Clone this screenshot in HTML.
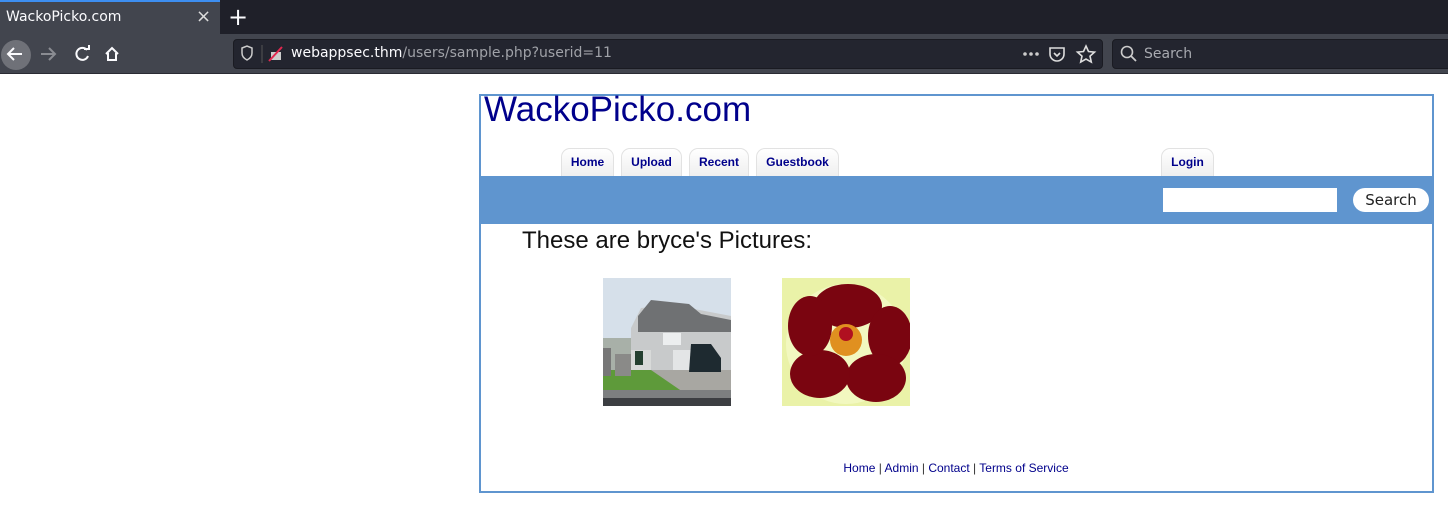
<!DOCTYPE html>
<html><head><meta charset="utf-8"><style>
*{margin:0;padding:0;box-sizing:border-box}
body{width:1448px;height:507px;background:#fff;position:relative;overflow:hidden;font-family:"Liberation Sans",sans-serif}
.a{position:absolute}
.tabbar{left:0;top:0;width:1448px;height:34px;background:#1f2029}
.tab{left:0;top:0;width:220px;height:34px;background:#42454e;border-top:2px solid #3d8ef0}
.toolbar{left:0;top:34px;width:1448px;height:40px;background:#42454e;border-bottom:1px solid #2a2b33}
.url{left:233px;top:39px;width:870px;height:30px;background:#23252f;border:1px solid #1a1b22;border-radius:4px}
.srch{left:1112px;top:39px;width:340px;height:30px;background:#23252f;border:1px solid #1a1b22;border-radius:4px}
.ui{font-family:"DejaVu Sans",sans-serif;color:#fbfbfe;font-size:14px}
.box{left:479px;top:94px;width:955px;height:399px;border:2px solid #5f95cf}
.navt{top:148px;height:28px;border:1px solid #e2e2e2;border-bottom:none;border-radius:9px 9px 0 0;background:linear-gradient(#fff,#efefef);font-size:12px;font-weight:bold;color:#00008b;text-align:center;line-height:27px}
</style></head><body>
<div class="a tabbar"></div>
<div class="a tab"></div>
<div class="a ui" style="left:6px;top:9px">WackoPicko.com</div>
<div class="a ui" style="left:196px;top:6px;font-size:18px;color:#ddd">×</div>
<div class="a ui" style="left:228px;top:3px;font-size:24px">+</div>
<div class="a toolbar"></div>
<div class="a" style="left:1px;top:40px;width:30px;height:30px;border-radius:50%;background:#6f7178"></div>
<svg class="a" style="left:0;top:34px" width="130" height="40"><g stroke="#fbfbfe" stroke-width="2" fill="none"><path d="M8 20h14M14 14l-6 6 6 6"/></g><g stroke="#8a8c92" stroke-width="2" fill="none"><path d="M41 20h14M49 14l6 6-6 6"/></g><g stroke="#fbfbfe" stroke-width="2" fill="none"><path d="M87 16a6 6 0 1 0 1 6"/><path d="M84 15h5v-4"/><path d="M106 20l6-6 6 6M108 19v7h8v-7"/></g></svg>
<div class="a url"></div>
<svg class="a" style="left:238px;top:44px" width="50" height="20"><path d="M4 4l5-2 5 2v5c0 4-3 6-5 7-2-1-5-3-5-7z" stroke="#ccc" stroke-width="1.5" fill="none"/><line x1="24" y1="1" x2="24" y2="19" stroke="#555"/><rect x="33" y="8" width="10" height="8" fill="#ccc"/><line x1="31" y1="17" x2="44" y2="3" stroke="#e22850" stroke-width="2"/></svg>
<div class="a ui" style="left:291px;top:45px">webappsec.thm<span style="color:#a0a2a8">/users/sample.php?userid=11</span></div>
<svg class="a" style="left:1020px;top:44px" width="80" height="20"><g fill="#ccc"><circle cx="5" cy="10" r="1.8"/><circle cx="11" cy="10" r="1.8"/><circle cx="17" cy="10" r="1.8"/></g><path d="M30 4h14v6a7 7 0 0 1-14 0z" stroke="#ddd" stroke-width="1.6" fill="none"/><path d="M34 9l3 3 3-3" stroke="#ddd" stroke-width="1.6" fill="none"/><path d="M66 2l2.5 5.5 6 .6-4.5 4 1.3 6-5.3-3-5.3 3 1.3-6-4.5-4 6-.6z" stroke="#ddd" stroke-width="1.6" fill="none"/></svg>
<div class="a srch"></div>
<svg class="a" style="left:1120px;top:45px" width="20" height="20"><circle cx="7" cy="7" r="5.5" stroke="#ccc" stroke-width="1.6" fill="none"/><line x1="11" y1="11" x2="16" y2="16" stroke="#ccc" stroke-width="1.8"/></svg>
<div class="a ui" style="left:1144px;top:46px;color:#a8aab0">Search</div>

<div class="a box"></div>
<div class="a" style="left:484px;top:90px;font-size:35px;color:#00008b">WackoPicko.com</div>
<div class="a navt" style="left:561px;width:53px">Home</div>
<div class="a navt" style="left:621px;width:61px">Upload</div>
<div class="a navt" style="left:689px;width:60px">Recent</div>
<div class="a navt" style="left:756px;width:83px">Guestbook</div>
<div class="a navt" style="left:1161px;width:53px">Login</div>
<div class="a" style="left:481px;top:176px;width:951px;height:48px;background:#5f95cf"></div>
<div class="a" style="left:1163px;top:188px;width:174px;height:24px;background:#fff"></div>
<div class="a" style="left:1353px;top:188px;width:76px;height:24px;background:#fff;border-radius:12px;font-family:'DejaVu Sans',sans-serif;font-size:15px;color:#222;text-align:center;line-height:24px">Search</div>
<div class="a" style="left:522px;top:227px;font-size:24px;color:#111">These are bryce's Pictures:</div>
<svg class="a" style="left:603px;top:278px" width="128" height="128"><rect width="128" height="128" fill="#d6e0ea"/><path d="M0 60h30v40H0z" fill="#a8b0a8"/><path d="M28 50l10-20 20-2 20 8 8-6 42 8v60H28z" fill="#c8cacb"/><path d="M35 38l13-16 38 4 12 10 30 6v12H35z" fill="#6f7173"/><rect x="60" y="55" width="18" height="12" fill="#eceeef"/><rect x="70" y="72" width="38" height="30" fill="#e3e5e6"/><rect x="28" y="72" width="20" height="30" fill="#d8dad9"/><path d="M0 92h100l10 20H0z" fill="#5e9a3a"/><path d="M48 92h80v22H80z" fill="#a8a7a2"/><path d="M88 66h20l10 14v14H86z" fill="#1e2a30"/><rect x="0" y="112" width="128" height="16" fill="#7d7f80"/><rect x="0" y="120" width="128" height="8" fill="#3c3e42"/><rect x="12" y="76" width="16" height="22" fill="#8a8a88"/><rect x="0" y="70" width="8" height="28" fill="#777"/><rect x="32" y="73" width="8" height="14" fill="#244030"/></svg>
<svg class="a" style="left:782px;top:278px" width="128" height="128"><rect width="128" height="128" fill="#eaf2a8"/><circle cx="64" cy="66" r="60" fill="#f2f8c0"/><g fill="#7a0510"><ellipse cx="66" cy="28" rx="34" ry="22"/><ellipse cx="108" cy="58" rx="22" ry="30"/><ellipse cx="94" cy="100" rx="30" ry="24"/><ellipse cx="38" cy="96" rx="30" ry="24"/><ellipse cx="28" cy="48" rx="22" ry="30"/></g><circle cx="64" cy="62" r="16" fill="#e09020"/><circle cx="64" cy="56" r="7" fill="#b01020"/></svg>
<div class="a" style="left:0;width:1912px;text-align:center;top:461px;font-size:12px;color:#333"><span style="color:#00008b">Home</span> | <span style="color:#00008b">Admin</span> | <span style="color:#00008b">Contact</span> | <span style="color:#00008b">Terms of Service</span></div>
</body></html>
